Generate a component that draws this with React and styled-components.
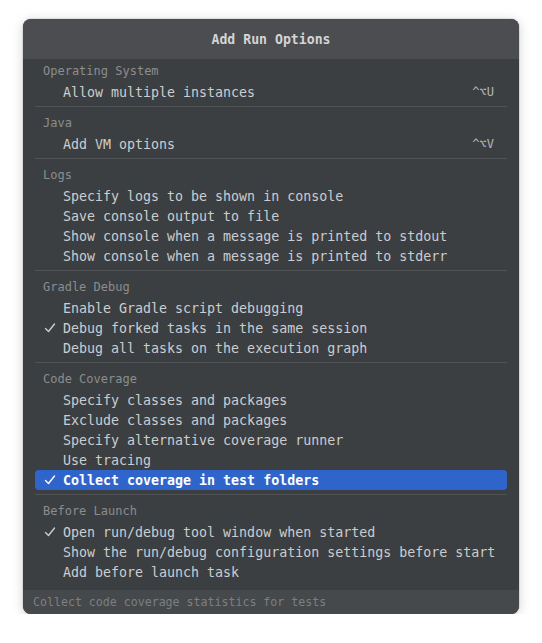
import styled, { createGlobalStyle } from "styled-components";

const GlobalStyle = createGlobalStyle`
  html, body {
    margin: 0;
    padding: 0;
    background: #ffffff;
  }
  body {
    font-family: "DejaVu Sans Mono", "Liberation Mono", monospace;
  }
`;

const groups = [
  {
    title: "Operating System",
    items: [{ label: "Allow multiple instances", shortcut: "^⌥U" }],
  },
  {
    title: "Java",
    items: [{ label: "Add VM options", shortcut: "^⌥V" }],
  },
  {
    title: "Logs",
    items: [
      { label: "Specify logs to be shown in console" },
      { label: "Save console output to file" },
      { label: "Show console when a message is printed to stdout" },
      { label: "Show console when a message is printed to stderr" },
    ],
  },
  {
    title: "Gradle Debug",
    items: [
      { label: "Enable Gradle script debugging" },
      { label: "Debug forked tasks in the same session", checked: true },
      { label: "Debug all tasks on the execution graph" },
    ],
  },
  {
    title: "Code Coverage",
    items: [
      { label: "Specify classes and packages" },
      { label: "Exclude classes and packages" },
      { label: "Specify alternative coverage runner" },
      { label: "Use tracing" },
      { label: "Collect coverage in test folders", checked: true, selected: true },
    ],
  },
  {
    title: "Before Launch",
    items: [
      { label: "Open run/debug tool window when started", checked: true },
      { label: "Show the run/debug configuration settings before start" },
      { label: "Add before launch task" },
    ],
  },
];

const CheckIcon = () => (
  <svg width="12" height="12" viewBox="0 0 12 12" fill="none">
    <path
      d="M1.5 6.5 L4.5 9.5 L10.5 2"
      stroke="currentColor"
      strokeWidth="1.4"
      strokeLinecap="round"
      strokeLinejoin="round"
    />
  </svg>
);

const App = () => {
  return (
    <>
      <GlobalStyle />
      <Page>
        <Popup>
          <TitleBar>Add Run Options</TitleBar>
          <Body>
            {groups.map((group, i) => (
              <Group key={group.title}>
                {i > 0 && <Separator />}
                <GroupTitle $first={i === 0}>{group.title}</GroupTitle>
                {group.items.map((item) => (
                  <Item key={item.label} $selected={item.selected}>
                    <Check>{item.checked && <CheckIcon />}</Check>
                    <Label>{item.label}</Label>
                    {item.shortcut && <Shortcut>{item.shortcut}</Shortcut>}
                  </Item>
                ))}
              </Group>
            ))}
          </Body>
          <Footer>Collect code coverage statistics for tests</Footer>
        </Popup>
      </Page>
    </>
  );
};

const Page = styled.div`
  padding: 19px 0 0 23px;
`;

const Popup = styled.div`
  width: 496px;
  background: #3c3f41;
  border-radius: 8px;
  overflow: hidden;
  box-shadow: 0 2px 12px rgba(0, 0, 0, 0.18), 0 0 0 1px rgba(0, 0, 0, 0.08);
  display: flex;
  flex-direction: column;
`;

const TitleBar = styled.div`
  height: 40px;
  display: flex;
  align-items: center;
  justify-content: center;
  background: #4b4d51;
  color: #d4d4d4;
  font-weight: bold;
  font-size: 13.2px;
`;

const Body = styled.div`
  padding-bottom: 8px;
`;

const Group = styled.div`
  display: flex;
  flex-direction: column;
`;

const Separator = styled.div`
  height: 1px;
  margin: 4px 12px 0;
  background: #505356;
`;

const GroupTitle = styled.div`
  height: 20px;
  line-height: 20px;
  margin: ${(p) => (p.$first ? "2px" : "6px")} 0 1px;
  padding-left: 20px;
  font-size: 12px;
  color: #8b8d90;
`;

const Item = styled.div`
  height: 20px;
  margin: 0 12px;
  padding: 0 13px 0 9px;
  display: flex;
  align-items: center;
  border-radius: 4px;
  background: ${(p) => (p.$selected ? "#2f65ca" : "transparent")};
  color: ${(p) => (p.$selected ? "#ffffff" : "#cbcdd0")};
  font-size: 13.3px;
  font-weight: ${(p) => (p.$selected ? "bold" : "normal")};
`;

const Check = styled.span`
  width: 19px;
  height: 12px;
  flex-shrink: 0;
  display: flex;
  align-items: center;
`;

const Label = styled.span`
  flex: 1;
  white-space: nowrap;
`;

const Shortcut = styled.span`
  font-size: 12px;
  color: #b4b6b9;
`;

const Footer = styled.div`
  height: 24px;
  display: flex;
  align-items: center;
  padding-left: 10px;
  background: #46494b;
  color: #7d7f82;
  font-size: 11.6px;
`;

export default App;
